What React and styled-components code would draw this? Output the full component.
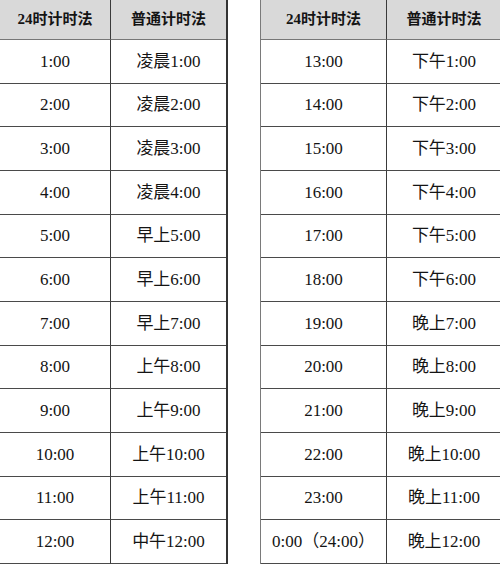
import React from 'react';
import styled, { createGlobalStyle } from 'styled-components';

const GlobalStyle = createGlobalStyle`
  html, body {
    margin: 0;
    padding: 0;
    background: #fff;
  }
  body {
    font-family: "Liberation Serif", "Noto Sans CJK SC", serif;
    color: #141414;
  }
`;

const Page = styled.div`
  display: flex;
  gap: 32px;
  width: 500px;
  height: 564px;
  box-sizing: border-box;
`;

const Table = styled.div`
  display: grid;
  grid-template-columns: ${(p) => p.$cols};
  grid-template-rows: 40px repeat(12, 1fr);
  height: 100%;
  box-sizing: border-box;
  border-left: ${(p) => (p.$first ? 'none' : '1.5px solid #7a7a7a')};
  border-right: 2px solid #333;
`;

const Cell = styled.div`
  display: flex;
  align-items: center;
  justify-content: center;
  box-sizing: border-box;
  font-size: 17px;
  line-height: 1;
  white-space: nowrap;
  border-bottom: 1.5px solid #4a4a4a;
  border-right: ${(p) => (p.$divider ? '1.5px solid #3a3a3a' : 'none')};
`;

const HeadCell = styled(Cell)`
  background: #d9d9d9;
  font-size: 15px;
  font-weight: 700;
  border-bottom-color: #777;
`;

const left = [
  ['1:00', '凌晨1:00'],
  ['2:00', '凌晨2:00'],
  ['3:00', '凌晨3:00'],
  ['4:00', '凌晨4:00'],
  ['5:00', '早上5:00'],
  ['6:00', '早上6:00'],
  ['7:00', '早上7:00'],
  ['8:00', '上午8:00'],
  ['9:00', '上午9:00'],
  ['10:00', '上午10:00'],
  ['11:00', '上午11:00'],
  ['12:00', '中午12:00'],
];

const right = [
  ['13:00', '下午1:00'],
  ['14:00', '下午2:00'],
  ['15:00', '下午3:00'],
  ['16:00', '下午4:00'],
  ['17:00', '下午5:00'],
  ['18:00', '下午6:00'],
  ['19:00', '晚上7:00'],
  ['20:00', '晚上8:00'],
  ['21:00', '晚上9:00'],
  ['22:00', '晚上10:00'],
  ['23:00', '晚上11:00'],
  ['0:00（24:00）', '晚上12:00'],
];

function TimeTable({ rows, cols, first }) {
  return (
    <Table $cols={cols} $first={first}>
      <HeadCell $divider>24时计时法</HeadCell>
      <HeadCell>普通计时法</HeadCell>
      {rows.map(([h24, h12]) => (
        <React.Fragment key={h24}>
          <Cell $divider>{h24}</Cell>
          <Cell>{h12}</Cell>
        </React.Fragment>
      ))}
    </Table>
  );
}

export default function App() {
  return (
    <>
      <GlobalStyle />
      <Page>
        <TimeTable rows={left} cols="111px 115px" first />
        <TimeTable rows={right} cols="126px 114px" />
      </Page>
    </>
  );
}
